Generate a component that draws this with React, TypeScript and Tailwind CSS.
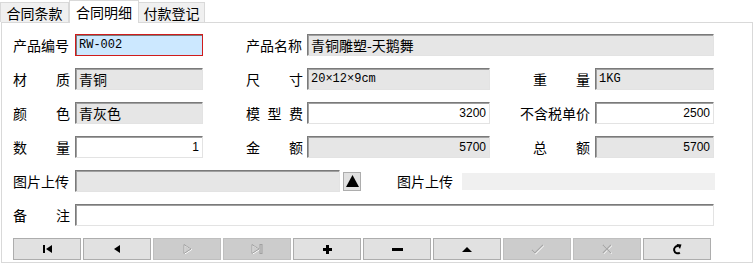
import type { ReactNode } from 'react'

const cjk = "font-['Noto_Sans_CJK_SC',sans-serif]"

function Label({ text, width = 57, align = 'left' }: { text: string; width?: number; align?: 'left' | 'right' }) {
  const chars = text.split(' ')
  const spread = chars.length > 1
  return (
    <div
      className={`flex shrink-0 ${align === 'right' ? 'justify-end' : 'justify-start'} text-[14px] leading-none text-black ${cjk}`}
      style={{ width }}
    >
      <div className={`flex ${spread ? 'w-[57px] justify-between' : ''}`}>
        {spread ? chars.map((c, i) => <span key={i}>{c}</span>) : <span className="whitespace-nowrap">{text}</span>}
      </div>
    </div>
  )
}

type FieldProps = {
  value?: string
  width: number
  gray?: boolean
  right?: boolean
  mono?: boolean
  focus?: boolean
}

function Field({ value = '', width, gray, right, mono, focus }: FieldProps) {
  const base = 'h-[22px] shrink-0 flex items-center px-[3px] overflow-hidden whitespace-nowrap text-black'
  const border = focus
    ? 'border border-[#d01c1c] bg-[#cce8ff] shadow-[inset_1px_1px_0_#7a7a7a]'
    : `border border-t-[#7a7a7a] border-l-[#7a7a7a] border-r-[#e3e3e3] border-b-[#e3e3e3] shadow-[inset_1px_1px_0_#a0a0a0] ${gray ? 'bg-[#e6e6e6]' : 'bg-white'}`
  const font = mono
    ? "font-['Liberation_Mono','Noto_Sans_CJK_SC',monospace] text-[12px]"
    : right
      ? "font-['Liberation_Sans',sans-serif] text-[12px]"
      : `${cjk} text-[14px]`
  return (
    <div className={`${base} ${border} ${font} ${right ? 'justify-end' : ''}`} style={{ width }}>
      <span className="leading-none">{value}</span>
    </div>
  )
}

function Row({ children }: { children: ReactNode }) {
  return <div className="flex h-[22px] items-center">{children}</div>
}

function NavButton({ children, disabled }: { children: ReactNode; disabled?: boolean }) {
  return (
    <div
      className={`flex h-[22px] w-[68px] items-center justify-center border ${
        disabled ? 'border-[#bfbfbf] bg-[#cccccc]' : 'border-[#adadad] bg-[#e1e1e1]'
      }`}
    >
      {children}
    </div>
  )
}

export default function App() {
  return (
    <div className="h-[265px] w-[755px] overflow-hidden bg-white">
      {/* tabs */}
      <div className={`flex h-[22px] items-end text-[14px] leading-none ${cjk}`}>
        <div className="flex h-[20px] w-[69px] items-center justify-center border border-b-0 border-[#d9d9d9] bg-[#f0f0f0]">
          合同条款
        </div>
        <div className="relative z-10 -mb-px flex h-[23px] w-[70px] items-center justify-center border border-b-0 border-[#d9d9d9] bg-white">
          合同明细
        </div>
        <div className="flex h-[20px] w-[66px] items-center justify-center border border-b-0 border-l-0 border-[#d9d9d9] bg-[#f0f0f0]">
          付款登记
        </div>
      </div>

      {/* panel */}
      <div className="ml-px flex h-[241px] w-[752px] flex-col gap-3 border border-[#d9d9d9] px-[11px] pt-[11px]">
        <Row>
          <Label text="产品编号" />
          <div className="ml-[5px]">
            <Field value="RW-002" width={128} mono focus />
          </div>
          <div className="ml-[43px]">
            <Label text="产品名称" />
          </div>
          <div className="ml-[4px]">
            <Field value="青铜雕塑-天鹅舞" width={407} gray />
          </div>
        </Row>

        <Row>
          <Label text="材 质" />
          <div className="ml-[5px]">
            <Field value="青铜" width={128} gray />
          </div>
          <div className="ml-[43px]">
            <Label text="尺 寸" />
          </div>
          <div className="ml-[4px]">
            <Field value="20×12×9cm" width={183} gray mono />
          </div>
          <div className="ml-[27px]">
            <Label text="重 量" width={73} align="right" />
          </div>
          <div className="ml-[5px]">
            <Field value="1KG" width={119} gray mono />
          </div>
        </Row>

        <Row>
          <Label text="颜 色" />
          <div className="ml-[5px]">
            <Field value="青灰色" width={128} gray />
          </div>
          <div className="ml-[43px]">
            <Label text="模 型 费" />
          </div>
          <div className="ml-[4px]">
            <Field value="3200" width={183} right />
          </div>
          <div className="ml-[27px]">
            <Label text="不含税单价" width={73} align="right" />
          </div>
          <div className="ml-[5px]">
            <Field value="2500" width={119} right />
          </div>
        </Row>

        <Row>
          <Label text="数 量" />
          <div className="ml-[5px]">
            <Field value="1" width={128} right />
          </div>
          <div className="ml-[43px]">
            <Label text="金 额" />
          </div>
          <div className="ml-[4px]">
            <Field value="5700" width={183} gray right />
          </div>
          <div className="ml-[27px]">
            <Label text="总 额" width={73} align="right" />
          </div>
          <div className="ml-[5px]">
            <Field value="5700" width={119} gray right />
          </div>
        </Row>

        <Row>
          <Label text="图片上传" />
          <div className="ml-[5px]">
            <Field width={265} gray />
          </div>
          <div className="ml-[3px] flex h-[19px] w-[18px] items-center justify-center border border-[#adadad] bg-[#e1e1e1]">
            <svg width="13" height="12" viewBox="0 0 13 12">
              <path d="M6.5 0 L13 12 L0 12 Z" fill="#000" />
            </svg>
          </div>
          <div className="ml-[36px]">
            <Label text="图片上传" />
          </div>
          <div className="ml-[8px] h-[17px] w-[253px] bg-[#f0f0f0]" />
        </Row>

        <Row>
          <Label text="备 注" />
          <div className="ml-[5px]">
            <Field width={639} />
          </div>
        </Row>

        <div className="flex gap-[2px]">
          <NavButton>
            <svg width="9" height="8" viewBox="0 0 9 8">
              <rect x="0" y="0" width="2" height="8" fill="#000" />
              <path d="M9 0 L3 4 L9 8 Z" fill="#000" />
            </svg>
          </NavButton>
          <NavButton>
            <svg width="6" height="8" viewBox="0 0 6 8">
              <path d="M6 0 L0 4 L6 8 Z" fill="#000" />
            </svg>
          </NavButton>
          <NavButton disabled>
            <svg width="9" height="10" viewBox="0 0 9 10">
              <path d="M1 0.5 L8 5 L1 9.5 Z" fill="none" stroke="#ffffff" strokeWidth="1" transform="translate(0.6 0.6)" />
              <path d="M1 0.5 L8 5 L1 9.5 Z" fill="none" stroke="#a0a0a0" strokeWidth="1" />
            </svg>
          </NavButton>
          <NavButton disabled>
            <svg width="12" height="10" viewBox="0 0 12 10">
              <path d="M1 0.5 L8 5 L1 9.5 Z" fill="none" stroke="#ffffff" strokeWidth="1" transform="translate(0.6 0.6)" />
              <path d="M1 0.5 L8 5 L1 9.5 Z" fill="none" stroke="#a0a0a0" strokeWidth="1" />
              <rect x="9" y="0.5" width="2" height="9" fill="none" stroke="#a0a0a0" strokeWidth="1" />
            </svg>
          </NavButton>
          <NavButton>
            <svg width="9" height="9" viewBox="0 0 9 9">
              <path d="M3 0 H6 V3 H9 V6 H6 V9 H3 V6 H0 V3 H3 Z" fill="#000" />
            </svg>
          </NavButton>
          <NavButton>
            <svg width="11" height="3" viewBox="0 0 11 3">
              <rect width="11" height="3" fill="#000" />
            </svg>
          </NavButton>
          <NavButton>
            <svg width="10" height="5" viewBox="0 0 10 5">
              <path d="M5 0 L10 5 L0 5 Z" fill="#000" />
            </svg>
          </NavButton>
          <NavButton disabled>
            <svg width="13" height="11" viewBox="0 0 13 11">
              <path d="M1.6 6.6 L4.6 9.6 L12.6 1.6" fill="none" stroke="#ffffff" strokeWidth="1.2" />
              <path d="M1 6 L4 9 L12 1" fill="none" stroke="#a8a8a8" strokeWidth="1.2" />
            </svg>
          </NavButton>
          <NavButton disabled>
            <svg width="11" height="11" viewBox="0 0 11 11">
              <path d="M1.6 1.6 L9.6 9.6 M9.6 1.6 L1.6 9.6" fill="none" stroke="#ffffff" strokeWidth="1.4" />
              <path d="M1 1 L9 9 M9 1 L1 9" fill="none" stroke="#a8a8a8" strokeWidth="1.4" />
            </svg>
          </NavButton>
          <NavButton>
            <svg width="10" height="11" viewBox="0 0 10 11">
              <path d="M6.5 2.2 A3.6 3.6 0 1 0 7.8 8.6" fill="none" stroke="#000" strokeWidth="2" />
              <path d="M4.5 0 L9.5 0.5 L8 5 Z" fill="#000" />
            </svg>
          </NavButton>
        </div>
      </div>
    </div>
  )
}
